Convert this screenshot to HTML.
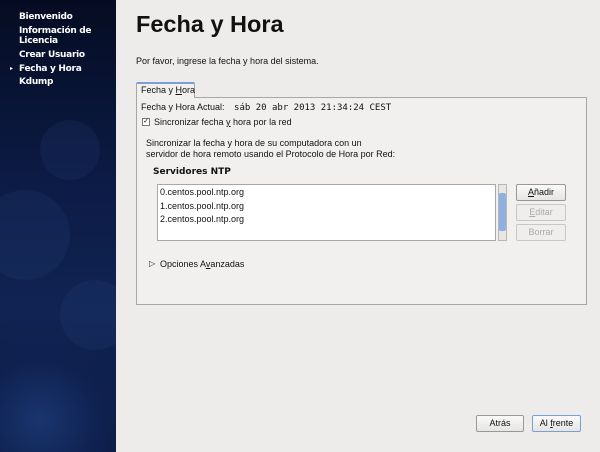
<!DOCTYPE html>
<html><head><style>
*{margin:0;padding:0;box-sizing:border-box}
body{width:600px;height:452px;overflow:hidden;background:#edeceb;font-family:"Liberation Sans","DejaVu Sans",sans-serif;font-size:9px;color:#111;position:relative}
.side{position:absolute;left:0;top:0;width:116px;height:452px;background:radial-gradient(circle at 40px 420px,#1a356e 0,#0f2150 60px,transparent 120px),linear-gradient(180deg,#050c22 0,#0c1b45 40%,#102454 70%,#0a1638 100%);overflow:hidden}
.side .c{position:absolute;border-radius:50%;background:rgba(60,90,160,.12)}
.side p{position:absolute;left:19px;color:#fff;font-weight:bold;font-size:9px;line-height:10px;font-family:"DejaVu Sans",sans-serif;letter-spacing:-0.3px}
.a{position:absolute;white-space:nowrap}
.btn{position:absolute;border:1px solid #9a9895;border-radius:2px;background:linear-gradient(#fafafa,#e6e5e3);text-align:center;line-height:15px;font-size:9px}
.dis{color:#aaa;border-color:#c8c7c5;background:#efeeed}
</style></head><body>
<div class="side">
<div class="c" style="left:40px;top:120px;width:60px;height:60px"></div>
<div class="c" style="left:-20px;top:190px;width:90px;height:90px"></div>
<div class="c" style="left:60px;top:280px;width:70px;height:70px"></div>
<p style="top:12px">Bienvenido</p>
<p style="top:26px">Información de<br>Licencia</p>
<p style="top:50px">Crear Usuario</p>
<p style="top:64px">Fecha y Hora</p>
<p style="top:64px;left:10px;font-size:6px">▸</p>
<p style="top:77px">Kdump</p>
</div>
<div class="a" style="left:136px;top:11px;font-size:23.5px;font-weight:bold;font-family:'Liberation Sans',sans-serif">Fecha y Hora</div>
<div class="a" style="left:136px;top:56px">Por favor, ingrese la fecha y hora del sistema.</div>
<div style="position:absolute;left:136px;top:97px;width:451px;height:208px;border:1px solid #a8a7a5;background:#f1f0ef"></div>
<div style="position:absolute;left:136px;top:82px;width:59px;height:16px;border:1px solid #a8a7a5;border-bottom:none;border-top:2px solid #7b9fd4;border-radius:2px 2px 0 0;background:#f1f0ef"></div>
<div class="a" style="left:141px;top:85px">Fecha y <u>H</u>ora</div>
<div class="a" style="left:141px;top:102px">Fecha y Hora Actual: <span style="font-family:'DejaVu Sans Mono',monospace;font-size:9px;margin-left:7px">sáb 20 abr 2013 21:34:24 CEST</span></div>
<div style="position:absolute;left:142px;top:118px;width:8px;height:8px;border:1px solid #777;background:#fff;font-size:7px;line-height:6px;text-align:center">✓</div>
<div class="a" style="left:154px;top:117px">Sincronizar fecha <u>y</u> hora por la red</div>
<div class="a" style="left:146px;top:138px;line-height:11px">Sincronizar la fecha y hora de su computadora con un<br>servidor de hora remoto usando el Protocolo de Hora por Red:</div>
<div class="a" style="left:153px;top:167px;font-weight:bold;font-family:'DejaVu Sans',sans-serif;font-size:9px">Servidores NTP</div>
<div style="position:absolute;left:157px;top:184px;width:339px;height:57px;border:1px solid #a8a7a5;background:#fff"></div>
<div class="a" style="left:160px;top:186px;line-height:13.5px">0.centos.pool.ntp.org<br>1.centos.pool.ntp.org<br>2.centos.pool.ntp.org</div>
<div style="position:absolute;left:498px;top:184px;width:9px;height:57px;border:1px solid #b8b7b5;background:#e8e7e6"></div>
<div style="position:absolute;left:499px;top:193px;width:7px;height:38px;background:#8fb0e0;border-radius:2px"></div>
<div class="btn" style="left:516px;top:184px;width:50px;height:17px"><u>A</u>ñadir</div>
<div class="btn dis" style="left:516px;top:204px;width:50px;height:17px"><u>E</u>ditar</div>
<div class="btn dis" style="left:516px;top:224px;width:50px;height:17px">Borrar</div>
<div class="a" style="left:149px;top:259px;font-size:8px">▷</div>
<div class="a" style="left:160px;top:259px">Opciones A<u>v</u>anzadas</div>
<div class="btn" style="left:476px;top:415px;width:48px;height:17px">Atrás</div>
<div class="btn" style="left:532px;top:415px;width:49px;height:17px;border-color:#7b9fd4">Al <u>f</u>rente</div>
</body></html>
